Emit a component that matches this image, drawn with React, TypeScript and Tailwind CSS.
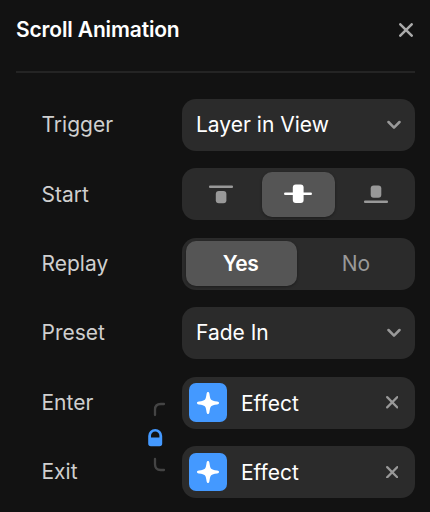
import type { ReactNode } from "react";

function Cross({ size, className }: { size: number; className: string }) {
  return (
    <svg width={size} height={size} viewBox="0 0 14 14" fill="none" className={className}>
      <path d="M1.3 1.3 12.7 12.7M12.7 1.3 1.3 12.7" stroke="currentColor" strokeWidth="2.5" strokeLinecap="round" />
    </svg>
  );
}

function Row({ label, children }: { label: string; children: ReactNode }) {
  return (
    <div className="flex h-[52px] items-center">
      <span className="w-[140.5px] pt-[0.4px] text-[#cfcfcf]">{label}</span>
      {children}
    </div>
  );
}

function Select({ value }: { value: string }) {
  return (
    <button className="flex h-[52px] w-[232.5px] items-center justify-between rounded-[14px] bg-[#2b2b2b] pr-[14px] pl-[14px] text-white">
      <span className="pt-[0.4px]">{value}</span>
      <svg width="14" height="10" viewBox="0 0 14 10" fill="none">
        <path d="M1.5 2 7 7.6 12.5 2" stroke="#999" strokeWidth="2.5" strokeLinecap="round" strokeLinejoin="round" />
      </svg>
    </button>
  );
}

function Effect() {
  return (
    <button className="flex h-[52px] w-[232.5px] items-center rounded-[14px] bg-[#2b2b2b] pr-[16.5px] pl-[7px] text-white">
      <span className="flex h-[38.5px] w-[38px] items-center justify-center rounded-[7px] bg-[#4499ff]">
        <svg width="22" height="22" viewBox="0 0 22 22" fill="#fff">
          <path d="M11 0C11.8 0 12.2.6 12.4 1.8C12.9 5.4 13.3 6.8 14.2 7.8C15.2 8.7 16.6 9.1 20.2 9.6C21.4 9.8 22 10.2 22 11C22 11.8 21.4 12.2 20.2 12.4C16.6 12.9 15.2 13.3 14.2 14.2C13.3 15.2 12.9 16.6 12.4 20.2C12.2 21.4 11.8 22 11 22C10.2 22 9.8 21.4 9.6 20.2C9.1 16.6 8.7 15.2 7.8 14.2C6.8 13.3 5.4 12.9 1.8 12.4C.6 12.2 0 11.8 0 11C0 10.2.6 9.8 1.8 9.6C5.4 9.1 6.8 8.7 7.8 7.8C8.7 6.8 9.1 5.4 9.6 1.8C9.8.6 10.2 0 11 0Z" />
        </svg>
      </span>
      <span className="ml-[14px] pt-[2px]">Effect</span>
      <Cross size={12.5} className="ml-auto text-[#999]" />
    </button>
  );
}

export default function App() {
  return (
    <div className="h-[512px] w-[430px] overflow-hidden bg-[#121212] pr-[15.5px] pl-4 font-['Inter',sans-serif] text-[21px] leading-[28px]">
      <header className="flex h-[73px] items-start justify-between border-b-2 border-[#242424] pt-4">
        <h1 className="text-[21px] font-semibold tracking-[-0.15px] text-white">Scroll Animation</h1>
        <Cross size={14} className="mt-[6.5px] mr-[1.5px] text-[#aaa]" />
      </header>

      <main className="flex flex-col gap-[17.4px] pt-[26px] pl-[25.5px]">
        <Row label="Trigger">
          <Select value="Layer in View" />
        </Row>
        <Row label="Start">
          <div className="flex h-[52px] w-[232.5px] items-center justify-between rounded-[14px] bg-[#2b2b2b]">
            <button className="flex h-[45px] w-[78px] items-center justify-center">
              <svg width="24" height="19" viewBox="0 0 24 19" fill="#999">
                <rect y="0.5" width="24" height="2.5" rx="1" />
                <rect x="6.8" y="6" width="10.6" height="12.3" rx="3" />
              </svg>
            </button>
            <button className="flex h-[45px] w-[73px] items-center justify-center rounded-[10px] bg-[#555] shadow-[0_1px_3px_rgba(0,0,0,0.35)]">
              <svg width="28" height="20" viewBox="0 0 28 20" fill="#fff">
                <rect y="8.4" width="28" height="2.6" rx="1.3" />
                <rect x="8.8" y="0.4" width="10.8" height="18.6" rx="3" />
              </svg>
            </button>
            <button className="flex h-[45px] w-[78px] items-center justify-center">
              <svg width="24" height="19" viewBox="0 0 24 19" fill="#999">
                <rect x="6.7" y="0.5" width="10.6" height="12.3" rx="3" />
                <rect y="15.4" width="24" height="2.6" rx="1" />
              </svg>
            </button>
          </div>
        </Row>
        <Row label="Replay">
          <div className="flex h-[52px] w-[232.5px] items-center rounded-[14px] bg-[#2b2b2b] pb-px pl-[3.5px]">
            <button className="h-[45px] w-[111px] rounded-[10px] bg-[#555] pt-[2px] pr-px font-semibold tracking-[-0.4px] text-white shadow-[0_1px_3px_rgba(0,0,0,0.35)]">Yes</button>
            <button className="h-[45px] flex-1 pt-[2px] pl-px text-[#999]">No</button>
          </div>
        </Row>
        <Row label="Preset">
          <Select value="Fade In" />
        </Row>
        <div className="flex">
          <div className="flex w-[105px] flex-col gap-[17.4px] text-[#cfcfcf]">
            <span className="flex h-[52px] items-center">Enter</span>
            <span className="flex h-[52px] items-center">Exit</span>
          </div>
          <svg width="35.5" height="121.5" viewBox="0 0 35.5 121.5" fill="none">
            <g stroke="#444" strokeWidth="2.3" strokeLinecap="round">
              <path d="M8 38V32.7Q8 27 13.7 27H17" />
              <path d="M8 82V87.3Q8 93 13.7 93H17" />
            </g>
            <path
              fill="#4499ff"
              fillRule="evenodd"
              d="M1.2 59A7 7 0 0 1 15.2 59V66.5Q15.2 69.2 12.5 69.2H3.9Q1.2 69.2 1.2 66.5ZM4 60.4H12.4V58.8A4.2 4.2 0 0 0 4 58.8Z"
            />
          </svg>
          <div className="flex flex-col gap-[17.4px]">
            <Effect />
            <Effect />
          </div>
        </div>
      </main>
    </div>
  );
}
